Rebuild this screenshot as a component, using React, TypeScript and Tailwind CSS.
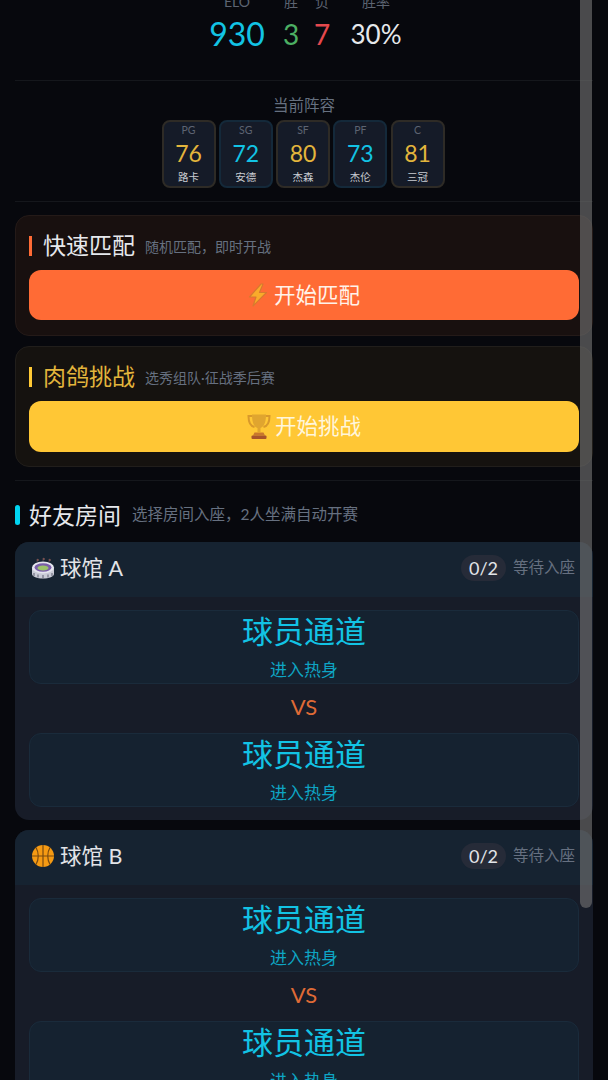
const font = "font-['Lato','Noto_Sans_CJK_SC',sans-serif]";

const lineup = [
  { pos: "PG", rating: 76, name: "路卡", gold: true },
  { pos: "SG", rating: 72, name: "安德", gold: false },
  { pos: "SF", rating: 80, name: "杰森", gold: true },
  { pos: "PF", rating: 73, name: "杰伦", gold: false },
  { pos: "C", rating: 81, name: "三冠", gold: true },
];

function Bolt() {
  return (
    <svg width="20" height="24" viewBox="0 0 20 24" className="shrink-0">
      <path d="M13 1 1.500 14H8L5 23 18.500 9.500H11.500L15 1z" fill="#f9ab2a" stroke="#d8792f" strokeWidth="1.200" strokeLinejoin="round" />
    </svg>
  );
}

function Trophy() {
  return (
    <svg width="24" height="27" viewBox="0 0 24 27" className="shrink-0">
      <path d="M5 3H1.500c0 6 1.500 10 6 11M19 3h3.500c0 6-1.500 10-6 11" fill="none" stroke="#d9992b" strokeWidth="2" />
      <path d="M5 1.500h14c0 7-1.500 12-5.500 13.500v4h-3v-4C6.500 13.500 5 8.500 5 1.500z" fill="#e0a52f" />
      <path d="M7.500 19.500h9l1.500 3H6z" fill="#c9772d" />
      <rect x="4.500" y="22.500" width="15" height="3.500" rx="1" fill="#a8542b" />
    </svg>
  );
}

function Stadium() {
  return (
    <svg width="24" height="24" viewBox="0 0 24 24" className="shrink-0">
      <path d="M6 6V3l2 1-2 1M18 6V3l2 1-2 1M12 5V2l2 1-2 1" fill="#c2413c" stroke="#6b5a5a" strokeWidth="0.600" />
      <path d="M1 12v6c0 2.500 5 4.500 11 4.500S23 20.500 23 18v-6z" fill="#c9cbd6" />
      <ellipse cx="12" cy="11.500" rx="11" ry="6" fill="#e4e5ee" />
      <ellipse cx="12" cy="11.500" rx="8.500" ry="4.200" fill="#7a5fa8" />
      <ellipse cx="12" cy="12" rx="5.500" ry="2.400" fill="#9cc36a" />
      <path d="M3 17v3M7 18.500v3M12 19v3.500M17 18.500v3M21 17v3" stroke="#7d7f8f" strokeWidth="1.400" />
    </svg>
  );
}

function Basketball() {
  return (
    <svg width="24" height="24" viewBox="0 0 24 24" className="shrink-0">
      <circle cx="12" cy="12" r="11" fill="#f59a13" />
      <path d="M12 1v22M1 12h22M5 3.500c3 5 3 12 0 17M19 3.500c-3 5-3 12 0 17" fill="none" stroke="#7a4a10" strokeWidth="1.200" />
    </svg>
  );
}

function Seat() {
  return (
    <div className="h-[74px] rounded-xl border border-[#1a2b3b] bg-[#152230] flex flex-col items-center">
      <div className="text-[31px] leading-[40px] text-[#12c3e4]">球员通道</div>
      <div className="text-[17px] leading-[20px] mt-[9px] text-[#0ea5c4]">进入热身</div>
    </div>
  );
}

function Room({ name, icon }: { name: string; icon: React.ReactNode }) {
  return (
    <div className="rounded-[14px] overflow-hidden bg-[#171c28]">
      <div className="h-[55px] bg-[#162331] flex items-center pl-[16px] pr-[18px] pb-[3px]">
        {icon}
        <span className="ml-[5px] text-[21.500px] text-[#e2e4e8]">{name}</span>
        <span className="ml-auto h-[26px] px-[8px] rounded-full bg-[#262b38] text-[18px] leading-[26px] text-[#e2e4e8]">0/2</span>
        <span className="ml-[7px] text-[15.500px] text-[#667080]">等待入座</span>
      </div>
      <div className="px-[14px] pt-[13px] pb-[13px]">
        <Seat />
        <div className="h-[49px] pb-[4px] flex items-center justify-center text-[22px] text-[#df6a36]">VS</div>
        <Seat />
      </div>
    </div>
  );
}

export default function App() {
  return (
    <div className={`relative h-[1080px] overflow-hidden bg-[#07080d] ${font}`}>
      <div className="px-[15px]">
        {/* stats */}
        <div className="relative h-[81px] border-b border-[#15171c]">
          <div className="absolute left-0 right-0 -top-[7px] flex justify-center">
            <div className="w-[56px] ml-[3px] flex flex-col items-center">
              <span className="text-[14px] leading-[18px] text-[#5d6472]">ELO</span>
              <span className="text-[32px] leading-[40px] mt-[3px] text-[#12c3e4]">930</span>
            </div>
            <div className="w-[22px] ml-[15px] flex flex-col items-center">
              <span className="text-[14px] leading-[18px] text-[#5d6472]">胜</span>
              <span className="text-[28px] leading-[40px] mt-[3px] text-[#4caf63]">3</span>
            </div>
            <div className="w-[22px] ml-[9px] flex flex-col items-center">
              <span className="text-[14px] leading-[18px] text-[#5d6472]">负</span>
              <span className="text-[28px] leading-[40px] mt-[3px] text-[#e5484d]">7</span>
            </div>
            <div className="w-[52px] ml-[17px] flex flex-col items-center">
              <span className="text-[14px] leading-[18px] text-[#5d6472]">胜率</span>
              <span className="text-[26px] leading-[40px] mt-[3px] text-[#e6e8ec]">30%</span>
            </div>
          </div>
        </div>

        {/* lineup */}
        <div className="h-[121px] border-b border-[#15171c] flex flex-col items-center">
          <div className="mt-[14px] text-[15.500px] leading-[20px] text-[#667080]">当前阵容</div>
          <div className="mt-[5px] -ml-[2px] flex gap-[3.250px]">
            {lineup.map((p) => (
              <div
                key={p.pos}
                className={`w-[54px] h-[68px] rounded-lg border-2 bg-[#151b28] flex flex-col items-center ${p.gold ? "border-[#2e2b26]" : "border-[#14293a]"}`}
              >
                <span className="text-[10.500px] leading-[14px] mt-[1px] text-[#5d6472]">{p.pos}</span>
                <span className={`text-[23px] leading-[28px] mt-[2px] ${p.gold ? "text-[#e3b53c]" : "text-[#12c3e4]"}`}>{p.rating}</span>
                <span className="text-[10.500px] leading-[14px] mt-[3px] text-[#c9ccd2]">{p.name}</span>
              </div>
            ))}
          </div>
        </div>

        {/* quick match */}
        <div className="mt-[13px] h-[121px] rounded-[14px] border border-[#241a18] bg-[#18100f] px-[13px] pt-[13px]">
          <div className="h-[34px] flex items-center">
            <span className="w-[3px] h-[20px] bg-[#ff6b35]" />
            <span className="ml-[11px] pb-[2px] text-[23px] text-[#e6e8ec]">快速匹配</span>
            <span className="ml-[10px] text-[14px] text-[#667080]">随机匹配，即时开战</span>
          </div>
          <div className="mt-[7px] h-[50px] rounded-xl bg-[#ff6b35] flex items-center justify-center gap-[6px]">
            <Bolt />
            <span className="text-[21.500px] text-[#fff3ea]">开始匹配</span>
          </div>
        </div>

        {/* draft challenge */}
        <div className="mt-[10px] h-[121px] rounded-[14px] border border-[#211e1b] bg-[#15120f] px-[13px] pt-[13px]">
          <div className="h-[34px] flex items-center">
            <span className="w-[3px] h-[20px] bg-[#ffc935]" />
            <span className="ml-[11px] pb-[2px] text-[23px] text-[#e3b53c]">肉鸽挑战</span>
            <span className="ml-[10px] text-[14px] text-[#667080]">选秀组队·征战季后赛</span>
          </div>
          <div className="mt-[7px] h-[51px] rounded-xl bg-[#ffc735] flex items-center justify-center gap-[4px]">
            <Trophy />
            <span className="text-[21.500px] text-[#fff6dc]">开始挑战</span>
          </div>
        </div>

        {/* friend rooms */}
        <div className="mt-[13px] border-t border-[#15171c] pt-[7px] flex items-center h-[62px]">
          <span className="w-[5px] h-[20px] rounded-sm bg-[#00d4f0]" />
          <span className="ml-[9px] text-[23px] text-[#e6e8ec]">好友房间</span>
          <span className="ml-[11px] text-[15.500px] text-[#667080]">选择房间入座，2人坐满自动开赛</span>
        </div>

        <div className="flex flex-col gap-[10px]">
          <Room name="球馆 A" icon={<Stadium />} />
          <Room name="球馆 B" icon={<Basketball />} />
        </div>
      </div>

      {/* overlay scrollbar */}
      <div className="absolute left-[580px] top-0 w-[12px] h-[908px] rounded-b-md bg-[#6f6f6f]/65" />
    </div>
  );
}
